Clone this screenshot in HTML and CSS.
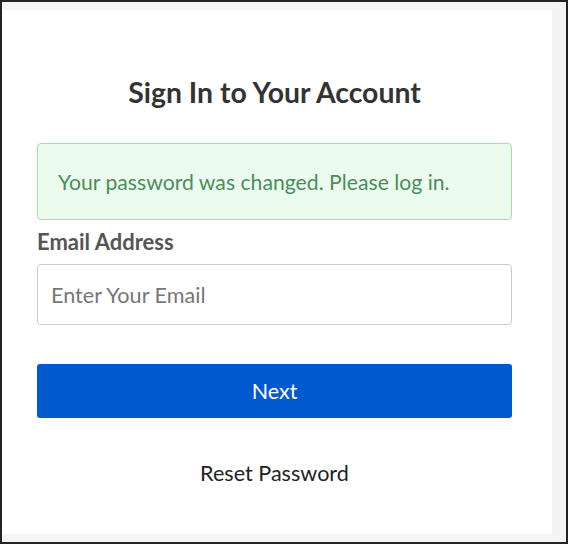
FILE: index.html
```html
<!DOCTYPE html>
<html>
<head>
<meta charset="utf-8">
<link rel="stylesheet" href="styles.css">
</head>
<body>
<div class="frame">
  <div class="card">
    <h1 class="title">Sign In to Your Account</h1>
    <div class="alert">Your password was changed. Please log in.</div>
    <label class="label" for="email">Email Address</label>
    <input class="input" id="email" type="text" placeholder="Enter Your Email">
    <button class="btn" type="button">Next</button>
    <a class="reset" href="#">Reset Password</a>
  </div>
</div>
</body>
</html>
```

FILE: styles.css
```css
* { box-sizing: border-box; }
html, body { margin: 0; padding: 0; }
body {
  font-family: Lato, "Open Sans", sans-serif;
  width: 568px;
  height: 544px;
}
.frame {
  width: 568px;
  height: 544px;
  border: 2px solid #222;
  background: #f4f4f4;
  padding: 8px 14px 8px 0;
  display: flex;
}
.card {
  flex: 1;
  background: #fff;
  padding: 65px 40px 0 35px;
  display: flex;
  flex-direction: column;
}
.title {
  margin: 0;
  text-align: center;
  font-size: 28.4px;
  font-weight: 700;
  line-height: 34px;
  color: #333;
}
.alert {
  margin-top: 34px;
  height: 77px;
  display: flex;
  align-items: center;
  padding: 0 20px;
  background: #ebfcee;
  border: 1px solid #a3e0ad;
  border-radius: 4px;
  color: #4e8c5d;
  font-size: 21.2px;
}
.label {
  margin-top: 9px;
  font-size: 22px;
  font-weight: 700;
  line-height: 26px;
  color: #555;
}
.input {
  margin-top: 9px;
  height: 61px;
  border: 1px solid #ccc;
  border-radius: 4px;
  padding: 0 13px;
  font-family: inherit;
  font-size: 21.6px;
  color: #555;
  outline: none;
}
.input::placeholder { color: #777; }
.btn {
  margin-top: 39px;
  height: 54px;
  border: none;
  border-radius: 3px;
  background: #0059cf;
  color: #fff;
  font-family: inherit;
  font-size: 21.5px;
}
.reset {
  margin-top: 42px;
  text-align: center;
  font-size: 21.6px;
  line-height: 26px;
  color: #222;
  text-decoration: none;
}
```
